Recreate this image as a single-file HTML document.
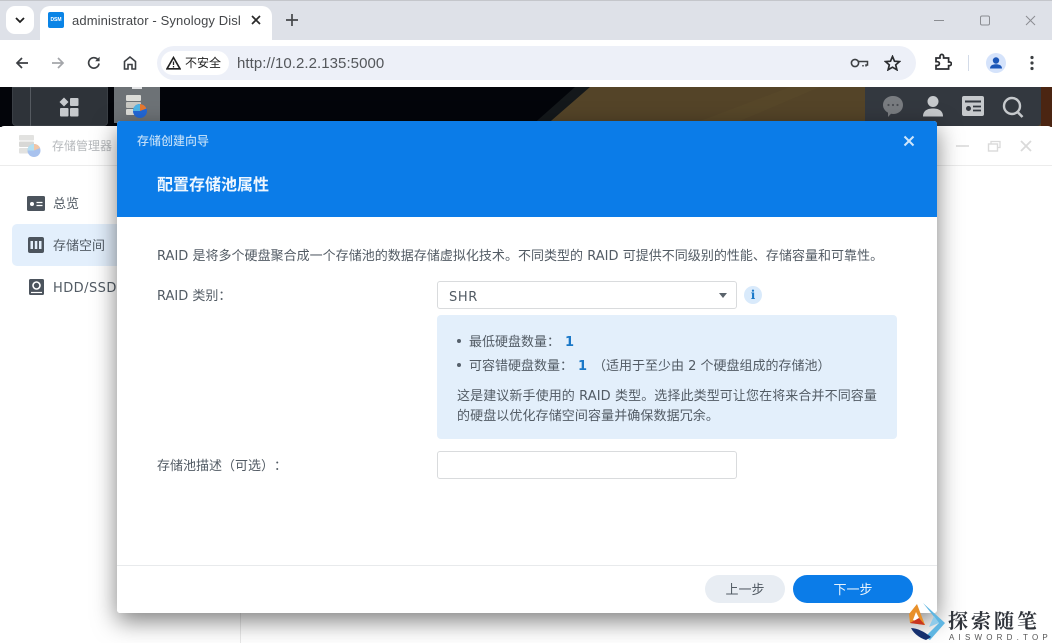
<!DOCTYPE html>
<html lang="zh"><head><meta charset="utf-8"><title>administrator - Synology DiskStation</title>
<style>
html,body{margin:0;padding:0;background:#fff}
#p{position:relative;width:1052px;height:643px;overflow:hidden;background:#fff;font-family:"DejaVu Sans","Noto Sans CJK SC",sans-serif;color:#414b55;font-size:13px;text-spacing-trim:space-all}
#p div,#p span,#p svg{position:absolute}
.t{white-space:nowrap;line-height:20px}
i{font-style:normal}
</style></head><body><div id="p">
<!-- browser chrome -->
<div style="left:0;top:0;width:1052px;height:40px;background:#dee1e8;border-top:1px solid #c4c6cb;box-sizing:border-box"></div>
<div style="left:6px;top:6px;width:28px;height:28px;background:#fff;border-radius:9px"></div>
<svg style="left:14px;top:15px" width="12" height="10" viewBox="0 0 12 10"><path d="M2 3l4 4 4-4" fill="none" stroke="#1f1f1f" stroke-width="1.8"/></svg>
<div style="left:40px;top:6px;width:232px;height:36px;background:#fff;border-radius:10px 10px 0 0"></div>
<div style="left:48px;top:12px;width:16px;height:16px;background:#0a84e6;border-radius:2px"></div>
<div class="t" style="left:48px;top:15px;width:16px;text-align:center;font:bold 5px/10px 'Liberation Sans',sans-serif;color:#fff">DSM</div>
<div class="t" style="left:72px;top:11px;width:168px;overflow:hidden;font:13px/20px 'Liberation Sans',sans-serif;color:#45474a;letter-spacing:.12px">administrator - Synology DiskStation</div>
<svg style="left:250px;top:14px" width="12" height="12" viewBox="0 0 12 12"><path d="M2 2l8 8M10 2l-8 8" stroke="#2a2a2a" stroke-width="1.7"/></svg>
<svg style="left:285px;top:13px" width="14" height="14" viewBox="0 0 14 14"><path d="M7 1v12M1 7h12" stroke="#45474a" stroke-width="1.7"/></svg>
<svg style="left:930px;top:14px" width="110" height="13" viewBox="0 0 110 13"><path d="M4 6.500h10" stroke="#8b8d92" stroke-width="1"/><rect x="50.500" y="2" width="9" height="9" rx="1.500" fill="none" stroke="#8b8d92"/><path d="M96 2l9 9M105 2l-9 9" stroke="#8b8d92" stroke-width="1"/></svg>
<!-- toolbar -->
<div style="left:0;top:40px;width:1052px;height:47px;background:#fff;border-radius:8px 8px 0 0"></div>
<svg style="left:14px;top:55px" width="16" height="16" viewBox="0 0 16 16"><path d="M14 8H3M8 3L3 8l5 5" fill="none" stroke="#3c3f43" stroke-width="1.7"/></svg>
<svg style="left:50px;top:55px" width="16" height="16" viewBox="0 0 16 16"><path d="M2 8h11M8 3l5 5-5 5" fill="none" stroke="#a4a6aa" stroke-width="1.7"/></svg>
<svg style="left:86px;top:55px" width="16" height="16" viewBox="0 0 16 16"><path d="M13 8.500A5.200 5.200 0 1 1 11.600 4.300" fill="none" stroke="#3c3f43" stroke-width="1.7"/><path d="M13.600 1.800v4.500H9.100z" fill="#3c3f43"/></svg>
<svg style="left:122px;top:55px" width="16" height="16" viewBox="0 0 16 16"><path d="M2.500 14V6.500L8 2l5.500 4.500V14H10V9.500H6V14z" fill="none" stroke="#3c3f43" stroke-width="1.6"/></svg>
<div style="left:157px;top:46px;width:759px;height:34px;background:#edf0f8;border-radius:17px"></div>
<div style="left:161px;top:51px;width:68px;height:24px;background:#fff;border-radius:12px"></div>
<svg style="left:166px;top:56px" width="15" height="14" viewBox="0 0 15 14"><path d="M7.500 1.500L14 12.800H1z" fill="none" stroke="#222" stroke-width="1.600"/><path d="M7.500 5.500v3.500M7.500 10v1.500" stroke="#222" stroke-width="1.300"/></svg>
<div class="t" style="left:185px;top:53px;font:12px/20px 'Liberation Sans','Noto Sans CJK SC',sans-serif;color:#222">不安全</div>
<div class="t" style="left:237px;top:54px;font:15px/20px 'Liberation Sans',sans-serif;color:#54575b;letter-spacing:.06px">http://10.2.2.135:5000</div>
<svg style="left:850px;top:56px" width="20" height="14" viewBox="0 0 20 14"><circle cx="5" cy="7" r="3.600" fill="none" stroke="#3c3f43" stroke-width="1.600"/><path d="M8.500 5.500h9v3.500h-1.500v1.500M13 9v1.500" fill="none" stroke="#3c3f43" stroke-width="1.500"/></svg>
<svg style="left:884px;top:55px" width="17" height="16" viewBox="0 0 17 16"><path d="M8.500 1.500l2 4.700 5 .4-3.800 3.300 1.200 4.900-4.400-2.600-4.400 2.600 1.200-4.900L1.500 6.600l5-.4z" fill="none" stroke="#2b2d30" stroke-width="1.700"/></svg>
<svg style="left:934px;top:53px" width="18" height="18" viewBox="0 0 18 18"><path d="M2 5h4V3.200a1.800 1.800 0 0 1 3.600 0V5h5v4h1a1.800 1.800 0 0 1 0 3.600h-1V16H2v-3.500h1.500a1.900 1.900 0 0 0 0-3.800H2z" fill="none" stroke="#2b2d30" stroke-width="1.700"/></svg>
<div style="left:968px;top:55px;width:1px;height:16px;background:#d3dbe8"></div>
<div style="left:986px;top:53px;width:20px;height:20px;border-radius:50%;background:#d5e3fb"></div>
<svg style="left:986px;top:53px" width="20" height="20" viewBox="0 0 20 20"><circle cx="10" cy="7.500" r="3.200" fill="#1b56b8"/><path d="M4 15.500c0-3.200 3-4.200 6-4.200s6 1 6 4.200z" fill="#1b56b8"/></svg>
<svg style="left:1029px;top:55px" width="6" height="16" viewBox="0 0 6 16"><circle cx="3" cy="2.500" r="1.600" fill="#3c3f43"/><circle cx="3" cy="8" r="1.600" fill="#3c3f43"/><circle cx="3" cy="13.500" r="1.600" fill="#3c3f43"/></svg>
<!-- desktop -->
<div style="left:0;top:87px;width:1052px;height:40px;background:#03050a"></div>
<svg style="left:0;top:87px" width="1052" height="40" viewBox="0 0 1052 40"><path d="M575 0H592L546 40H530z" fill="#14181b"/><path d="M590 0H1052V40H544z" fill="#544428"/><path d="M700 34L790 0h30L740 34z" fill="#574729"/><path d="M1041 0h11v40h-11z" fill="#4b2512"/></svg>
<div style="left:12px;top:87px;width:96px;height:39px;background:#2e3339;border-radius:0 0 4px 4px;box-shadow:inset 0 0 0 1px #3a3f45"></div>
<div style="left:30px;top:87px;width:1px;height:39px;background:#555a60"></div>
<svg style="left:59px;top:97px" width="20" height="20" viewBox="0 0 20 20" fill="#c7cacd"><path d="M5 .500L9.500 5 5 9.500.5 5z"/><rect x="11" y="1" width="8.500" height="8" rx="1"/><rect x="1" y="11" width="8.500" height="8.500" rx="1"/><rect x="11" y="11" width="8.500" height="8.500" rx="1"/></svg>
<div style="left:114px;top:87px;width:46px;height:36px;background:#6d7276"></div>
<div style="left:132px;top:87px;width:10px;height:2px;background:#e3e4e6"></div>
<svg style="left:125px;top:94px" width="24" height="27" viewBox="0 0 24 27"><rect x="1" y="1" width="15" height="6" rx="1" fill="#dcdcd8"/><rect x="1" y="8" width="15" height="6" rx="1" fill="#c9c9c4"/><rect x="1" y="15" width="15" height="6" rx="1" fill="#dcdcd8"/><circle cx="15" cy="17" r="7" fill="#2368d8"/><path d="M15 17V10a7 7 0 0 1 6.500 4.500z" fill="#e8792e"/><path d="M15 17L8 17a7 7 0 0 1 7-7z" fill="#4fb5e6"/></svg>
<div style="left:865px;top:87px;width:176px;height:39px;background:#33383f;border-radius:0 0 4px 4px"></div>
<svg style="left:882px;top:95px" width="22" height="23" viewBox="0 0 22 23"><path d="M11 1c5.800 0 10 3.800 10 9s-4.200 9-10 9c-.7 0-1.300 0-2-.2L6 22v-4.400C3 16 1 13.300 1 10c0-5.200 4.200-9 10-9z" fill="#797c80"/><circle cx="6.500" cy="10" r="1.100" fill="#4a4d52"/><circle cx="11" cy="10" r="1.100" fill="#4a4d52"/><circle cx="15.500" cy="10" r="1.100" fill="#4a4d52"/></svg>
<svg style="left:922px;top:95px" width="22" height="22" viewBox="0 0 22 22" fill="#c6c9cc"><circle cx="11" cy="6.500" r="5.500"/><path d="M1 21.500c0-6 4.500-8 10-8s10 2 10 8z"/></svg>
<svg style="left:962px;top:96px" width="22" height="20" viewBox="0 0 22 20"><rect width="22" height="20" rx="2" fill="#c6c9cc"/><path d="M3 5.500h16" stroke="#33383f" stroke-width="2"/><circle cx="6.500" cy="12.500" r="2.500" fill="#33383f"/><path d="M11 10.500h8M11 14.500h8" stroke="#33383f" stroke-width="1.800"/></svg>
<svg style="left:1002px;top:96px" width="23" height="22" viewBox="0 0 23 22"><circle cx="10" cy="10" r="8" fill="none" stroke="#c6c9cc" stroke-width="2.400"/><path d="M15.500 16l5 5" stroke="#c6c9cc" stroke-width="2.600"/></svg>
<!-- app window -->
<div style="left:0;top:126px;width:1052px;height:517px;background:#fff;border-radius:4px 4px 0 0"></div>
<div style="left:0;top:165px;width:1052px;height:1px;background:#ececec"></div>
<div style="left:240px;top:166px;width:1px;height:477px;background:#e8e8e8"></div>
<svg style="left:19px;top:135px" width="23" height="24" viewBox="0 0 23 24"><rect x="0" y="0" width="15" height="5.500" rx="1" fill="#e2e2e0"/><rect x="0" y="6.500" width="15" height="5.500" rx="1" fill="#d8d8d6"/><rect x="0" y="13" width="15" height="5.500" rx="1" fill="#e2e2e0"/><circle cx="15" cy="15.500" r="6.500" fill="#a8c2ee"/><path d="M15 15.500V9a6.500 6.500 0 0 1 6 4z" fill="#f2c6a6"/><path d="M15 15.500H8.500A6.500 6.500 0 0 1 15 9z" fill="#b5e0f2"/></svg>
<div class="t" style="left:52px;top:136px;font-size:12px;color:#b6b9bc">存储管理器</div>
<svg style="left:955px;top:140px" width="82" height="12" viewBox="0 0 82 12"><path d="M1 6h13" stroke="#dadada" stroke-width="1.600"/><rect x="33.500" y="4" width="9" height="7" fill="none" stroke="#dadada" stroke-width="1.400"/><path d="M36 3.500V1.500h9v6h-2" fill="none" stroke="#dadada" stroke-width="1.300"/><path d="M66 1l10 10M76 1L66 11" stroke="#dadada" stroke-width="1.800"/></svg>
<div style="left:12px;top:224px;width:120px;height:42px;background:#e3effc;border-radius:5px"></div>
<svg style="left:27px;top:196px" width="18" height="15" viewBox="0 0 18 15"><rect width="18" height="15" rx="1.500" fill="#4c545d"/><circle cx="5" cy="8" r="2" fill="#fff"/><path d="M9.500 6.500h6M9.500 9.500h6" stroke="#fff" stroke-width="1.200"/></svg>
<div class="t" style="left:53px;top:195px;color:#525b64">总览</div>
<svg style="left:28px;top:237px" width="16" height="16" viewBox="0 0 16 16"><rect width="16" height="16" rx="2" fill="#4c545d"/><path d="M2.500 4h2.500v8H2.500zM6.800 4h2.500v8H6.800zM11 4h2.500v8H11z" fill="#e3effc"/></svg>
<div class="t" style="left:53px;top:237px;color:#525b64">存储空间</div>
<svg style="left:29px;top:279px" width="15" height="16" viewBox="0 0 15 16"><rect width="15" height="16" rx="1.500" fill="#4c545d"/><circle cx="7.500" cy="6.500" r="3.500" fill="none" stroke="#fff" stroke-width="1.600"/><path d="M2 13.500h11" stroke="#fff" stroke-width="1.200"/></svg>
<div class="t" style="left:53px;top:279px;color:#525b64;letter-spacing:.45px">HDD/SSD</div>
<!-- shadow behind dialog -->
<div style="left:117px;top:121px;width:820px;height:492px;border-radius:3px;box-shadow:0 8px 24px rgba(0,0,0,.5)"></div>
<!-- dialog -->
<div style="left:117px;top:121px;width:820px;height:492px;background:#fff;border-radius:3px;overflow:hidden">
<div style="left:0;top:0;width:820px;height:96px;background:#0b7ce8"></div>
<div class="t" style="left:20px;top:10px;font-size:12px;font-weight:500;color:#bcdcf8">存储创建向导</div>
<svg style="left:786px;top:14px" width="12" height="12" viewBox="0 0 12 12"><path d="M1.500 1.500l9 9M10.500 1.500l-9 9" stroke="#cfe6fb" stroke-width="2"/></svg>
<div class="t" style="left:40px;top:54px;font-size:16px;font-weight:700;color:#eef6fe">配置存储池属性</div>
<div class="t" style="left:40px;top:126px;font-size:13px;letter-spacing:.02px;color:#525b64">RAID 是将多个硬盘聚合成一个存储池的数据存储虚拟化技术。不同类型的 RAID 可提供不同级别的性能、存储容量和可靠性。</div>
<div class="t" style="left:40px;top:166px;font-size:13px;color:#525b64">RAID 类别：</div>
<div style="left:320px;top:160px;width:300px;height:28px;box-sizing:border-box;border:1px solid #d9dbdd;border-radius:3px;background:#fff"></div>
<div class="t" style="left:332px;top:167px;font-size:13px;letter-spacing:.6px;color:#525b64">SHR</div>
<svg style="left:602px;top:172px" width="8" height="5" viewBox="0 0 8 5"><path d="M0 0h8L4 5z" fill="#5a636c"/></svg>
<div style="left:627px;top:165px;width:18px;height:18px;border-radius:50%;background:#d9eafb"></div>
<div class="t" style="left:627px;top:164px;width:18px;text-align:center;font:bold 12px/20px 'DejaVu Serif',serif;color:#1a78c8">i</div>
<div style="left:320px;top:194px;width:460px;height:124px;background:#e3effb;border-radius:4px"></div>
<div style="left:340px;top:218px;width:4px;height:4px;border-radius:50%;background:#55606b"></div>
<div class="t" style="left:352px;top:212px;font-size:13px;color:#525b64">最低硬盘数量：</div>
<div class="t" style="left:448px;top:212px;font:bold 13px/20px 'DejaVu Sans',sans-serif;color:#1a78c8">1</div>
<div style="left:340px;top:242px;width:4px;height:4px;border-radius:50%;background:#55606b"></div>
<div class="t" style="left:352px;top:236px;font-size:13px;color:#525b64">可容错硬盘数量：</div>
<div class="t" style="left:461px;top:236px;font:bold 13px/20px 'DejaVu Sans',sans-serif;color:#1a78c8">1</div>
<div class="t" style="left:476px;top:236px;font-size:13px;color:#525b64">（适用于至少由 2 个硬盘组成的存储池）</div>
<div class="t" style="left:340px;top:266px;font-size:13px;letter-spacing:.1px;color:#525b64">这是建议新手使用的 RAID 类型。选择此类型可让您在将来合并不同容量</div>
<div class="t" style="left:340px;top:286px;font-size:13px;letter-spacing:.1px;color:#525b64">的硬盘以优化存储空间容量并确保数据冗余。</div>
<div class="t" style="left:40px;top:336px;font-size:13px;color:#525b64">存储池描述（可选）：</div>
<div style="left:320px;top:330px;width:300px;height:28px;box-sizing:border-box;border:1px solid #d9dbdd;border-radius:3px;background:#fff"></div>
<div style="left:0;top:444px;width:820px;height:1px;background:#e8eaec"></div>
<div style="left:588px;top:454px;width:80px;height:28px;background:#e8edf3;border-radius:14px"></div>
<div class="t" style="left:588px;top:460px;width:80px;text-align:center;font-size:13px;color:#525b64">上一步</div>
<div style="left:676px;top:454px;width:120px;height:28px;background:#0b7ce8;border-radius:14px"></div>
<div class="t" style="left:676px;top:460px;width:120px;text-align:center;font-size:13px;color:#e8f3fd">下一步</div>
</div>
<!-- watermark -->
<svg style="left:908px;top:603px" width="38" height="38" viewBox="0 0 38 38"><path d="M9 1L1 11l1 9 15 2-5-13z" fill="#e8902a"/><path d="M8 9L5 17l8 2z" fill="#fff"/><path d="M2 20l15 2-6-7z" fill="#c8351f"/><path d="M15 0l22 20-15 17-5-3 14-14z" fill="#5fb6e2"/><path d="M26 13l-5 11 10-4z" fill="#8fcbea"/><path d="M3 25c7 0 15 5 20 9l-5 3C12 35 6 31 3 25z" fill="#16306e"/></svg>
<div class="t" style="left:948px;top:609px;font:700 20px/22px 'Noto Serif CJK SC',serif;color:#30343b;letter-spacing:3px">探索随笔</div>
<div class="t" style="left:949px;top:633px;font:8px/10px 'Liberation Sans',sans-serif;color:#555;letter-spacing:4.200px">AISWORD.TOP</div>
</div></body></html>
